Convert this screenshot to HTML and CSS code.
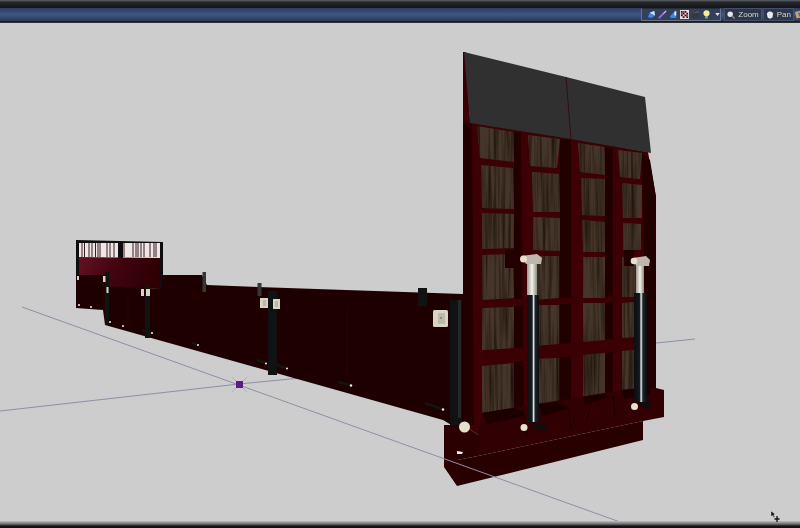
FILE: index.html
```html
<!DOCTYPE html>
<html lang="en">
<head>
<meta charset="utf-8">
<title>3D viewport</title>
<link rel="stylesheet" href="styles.css">
</head>
<body>
<div class="app">
  <header class="topbar">
    <div class="strip"></div>
    <div class="toolbar">
      <div class="group">
        <svg class="ico" viewBox="0 0 10 10"><path d="M1 8 3 3 8 1 9 6 5 9Z" fill="#3f86e0"/><path d="M3 3 8 1 9 6Z" fill="#cfe4fa"/></svg>
        <svg class="ico" viewBox="0 0 10 10"><path d="M1 9 9 1" stroke="#b060e0" stroke-width="2"/><path d="M6 4 9 1" stroke="#e8c8f8" stroke-width="1"/></svg>
        <svg class="ico" viewBox="0 0 10 10"><path d="M1 7 6 2 8 1V9H2Z" fill="#3f86dc"/><path d="M6 2 8 1V6H6Z" fill="#e6f0fb"/></svg>
        <svg class="ico" viewBox="0 0 10 10"><rect width="10" height="10" fill="#e8e0e8"/><path d="M1 1h2v2H1ZM5 1h2v2H5ZM3 3h2v2H3ZM7 3h2v2H7ZM1 5h2v2H1ZM5 5h2v2H5ZM3 7h2v2H3ZM7 7h2v2H7Z" fill="#301020"/><path d="M3 1h2v2H3ZM1 3h2v2H1ZM7 5h2v2H7Z" fill="#c02838"/></svg>
        <svg class="ico" viewBox="0 0 10 10"><path d="M1 4 8 1 9 3V9H1Z" fill="#34383c"/><path d="M1 4 8 1 9 3Z" fill="#5a5e60"/></svg>
        <svg class="ico" viewBox="0 0 10 10"><circle cx="5" cy="3.600" r="3.400" fill="#f6f090"/><rect x="3.600" y="6.600" width="2.800" height="2.800" fill="#a8a878"/></svg>
        <svg class="caret" viewBox="0 0 6 4"><path d="M0 0H6L3 4Z" fill="#e8e8e8"/></svg>
      </div>
      <div class="btn">
        <svg class="ico" viewBox="0 0 10 10"><circle cx="4" cy="4" r="3.400" fill="#e4e8ee"/><path d="M6 6 9.500 9.500" stroke="#8a8a8a" stroke-width="1.600"/></svg>
        <span class="label">Zoom</span>
      </div>
      <div class="btn">
        <svg class="ico" viewBox="0 0 10 10"><path d="M1 3 3 1 5 .5 7 1 9 3 8 8 6 9.500H4L2 8Z" fill="#e6eaf0"/></svg>
        <span class="label">Pan</span>
      </div>
      <svg class="ico last" viewBox="0 0 10 10"><path d="M0 2 8 0 10 8 2 10Z" fill="#d8a060"/><path d="M4 2 8 4 5 8Z" fill="#3868c8"/></svg>
    </div>
    <div class="edge"></div>
  </header>

  <main class="viewport">
    <svg class="scene" viewBox="0 23 800 498" aria-hidden="true">
      <defs>
        <filter id="grain" x="0" y="0" width="100%" height="100%" color-interpolation-filters="sRGB">
          <feTurbulence type="fractalNoise" baseFrequency="0.35 0.012" numOctaves="2" seed="7" result="n"/>
          <feColorMatrix in="n" type="matrix" values="0 0 0 0 0.12  0 0 0 0 0.08  0 0 0 0 0.05  2.200 0 0 0 -0.850" result="d"/>
          <feComposite in="d" in2="SourceAlpha" operator="in" result="s"/>
          <feMerge><feMergeNode in="SourceGraphic"/><feMergeNode in="s"/></feMerge>
        </filter>
        <linearGradient id="backRed" x1="0" x2="1" y1="0" y2="0.200">
          <stop offset="0" stop-color="#641222"/>
          <stop offset=".5" stop-color="#42040e"/>
          <stop offset="1" stop-color="#2e0005"/>
        </linearGradient>
        <linearGradient id="chrome" x1="0" x2="1" y1="0" y2="0">
          <stop offset="0" stop-color="#9a968c"/>
          <stop offset=".5" stop-color="#f4f2ea"/>
          <stop offset="1" stop-color="#8e8a80"/>
        </linearGradient>
        <linearGradient id="tube" x1="0" x2="1" y1="0" y2="0">
          <stop offset="0" stop-color="#0c0e10"/>
          <stop offset=".42" stop-color="#14181c"/>
          <stop offset=".55" stop-color="#e8eef2"/>
          <stop offset=".68" stop-color="#20252a"/>
          <stop offset="1" stop-color="#0a0c0e"/>
        </linearGradient>
      </defs>

      <path class="axis" d="M0 411 239 384 656 343 695 339"/>

      <!-- far gate -->
      <path class="black" d="M76 240 163 242 163 289 160 289 160 258 79 257 79 308 76 308Z"/>
      <rect class="slatbg" x="79" y="243" width="81" height="15"/>
      <path class="slats" d="M82 243V257M84.500 243V257M89 243V257M92 243V257M95.500 243V257M98 243V257M100 243V257M107 243V257M110 243V257M114 243V257M124 243V257M133 243V257M136 243V257M138 243V257M141 243V257M144 243V257M150 243V257M154 243V257M156 243V257"/>
      <rect class="black" x="118" y="242" width="5" height="16"/>
      <path fill="url(#backRed)" d="M79 257 160 258 160 289 105 287 105 275 79 275Z"/>

      <!-- long side wall -->
      <path class="wall" d="M76 275 105 275 105 286 162 289 162 275 202 275 207 285 258 287 463 294 463 432 443 420 105 325 103 310 76 308Z"/>
      <path class="seam" d="M194 290V345M347 305V382M128 290V328"/>

      <!-- posts -->
      <rect class="post" x="105" y="272" width="4" height="53"/>
      <rect class="post" x="145" y="285" width="5" height="53"/>
      <rect class="post2" x="202.500" y="272" width="3.500" height="20"/>
      <rect class="post2" x="257.500" y="283" width="4" height="13"/>
      <rect class="post" x="268" y="291" width="9" height="84"/>
      <rect class="post" x="418" y="288" width="9" height="18"/>
      <rect class="post" x="450" y="300" width="12" height="125"/>
      <rect class="post3" x="458" y="300" width="3" height="118"/>

      <!-- labels -->
      <rect class="tag" x="77" y="276" width="2" height="4"/>
      <rect class="tag" x="103" y="276" width="2.500" height="6"/>
      <rect class="tag" x="106.500" y="287" width="2" height="6"/>
      <rect class="tag" x="141" y="289" width="3" height="7"/>
      <rect class="tag" x="146" y="289" width="4" height="7"/>
      <g>
        <rect class="tag" x="260" y="298" width="8" height="10"/><rect class="tagin" x="263" y="300" width="3" height="6"/>
        <rect class="tag" x="273" y="299" width="7" height="10"/><rect class="tagin" x="275" y="301" width="3" height="6"/>
        <rect class="tag" x="433" y="310" width="15" height="17" rx="1.500"/><rect class="tagin" x="438" y="313" width="7" height="11"/><circle class="dot" cx="441" cy="318" r=".8"/>
      </g>

      <!-- catches -->
      <path class="catch" d="M257 360 266 363M277 365 286 368M192 343 197 345M338 382 350 385M425 403 442 409M142 330 151 333"/>
      <g class="dots">
        <circle cx="266" cy="363.500" r="1"/><circle cx="287" cy="368.500" r="1"/><circle cx="198" cy="345" r="1"/>
        <circle cx="351" cy="385.500" r="1.200"/><circle cx="443" cy="409.500" r="1.200"/><circle cx="152" cy="333" r="1"/>
        <circle cx="123" cy="326" r="1"/><circle cx="110" cy="322" r="1"/><circle cx="91" cy="307" r="1"/><circle cx="79" cy="305" r="1"/>
      </g>

      <!-- big gate -->
      <path class="frame" d="M463 52 470 122 571 138 648 152 656 197 656 388 650 394 480 436 463 425Z"/>
      <path class="frameDark" d="M463 52 470 122 472 124 474 425 463 425Z"/>
      <path class="frameDark" d="M514 132 521 133 524 415 514 420Z"/>
      <path class="frameDark" d="M560 139 571 140 571 405 560 408Z"/>
      <path class="frameDark" d="M605 147 613 149 613 395 605 398Z"/>
      <path class="frameDark" d="M642 153 650 160 656 197 656 388 646 390Z"/>
      <path class="frameBright" d="M483 300 514 298 514 307 483 308ZM483 350 514 348 646 336 646 349 514 362 483 366ZM514 299 622 296 622 302 514 306Z"/>

      <g class="wood">
        <polygon points="477,126 514,132 514,162 480,158"/>
        <polygon points="481,165 513,168 514,209 482,208"/>
        <polygon points="482,213 514,214 514,248 482,249"/>
        <polygon points="482,255 513,254 514,298 482,300"/>
        <polygon points="482,308 514,307 514,348 482,350"/>
        <polygon points="482,366 514,363 514,408 482,413"/>
        <polygon points="528,135 560,139 557,168 530,166"/>
        <polygon points="532,172 559,174 560,212 533,212"/>
        <polygon points="533,217 560,218 560,251 533,250"/>
        <polygon points="533,256 559,256 559,298 533,300"/>
        <polygon points="533,305 559,305 559,344 533,346"/>
        <polygon points="533,359 559,358 559,402 533,404"/>
        <polygon points="578,143 605,147 605,175 580,172"/>
        <polygon points="581,178 605,179 605,216 582,215"/>
        <polygon points="582,220 605,222 605,252 583,252"/>
        <polygon points="583,257 605,257 605,298 583,298"/>
        <polygon points="583,303 605,303 605,340 583,342"/>
        <polygon points="583,355 605,353 605,394 583,397"/>
        <polygon points="618,150 642,153 640,179 620,177"/>
        <polygon points="622,183 642,185 642,218 623,218"/>
        <polygon points="623,223 641,224 641,250 623,250"/>
        <polygon points="622,257 642,257 642,297 622,297"/>
        <polygon points="622,303 635,302 635,337 622,338"/>
        <polygon points="622,351 635,350 635,390 622,390"/>
      </g>
      <path class="frameDark" d="M505 250H514V268H505ZM624 250H634V266H624Z"/>

      <!-- base block -->
      <path class="baseUpper" d="M482 413 622 390 643 388 656 388 664 390 664 417 643 421 478 456 478 432Z"/>
      <path class="baseBeam" d="M457 460 478 456 643 421 643 440 457 486Z"/>
      <path class="baseLeft" d="M444 425 463 425 480 436 478 456 457 460 457 486 444 467Z"/>
      <path class="baseShade" d="M524 415 527 436M569 407 571 428M613 396 615 417M586 422 590 408"/>
      <path class="sill" d="M482 413 514 408 524 412 524 416 488 424ZM539 404 559 402 570 408 542 416ZM583 397 605 394 610 397 585 404ZM622 390 650 387 650 394 624 399Z"/>

      <!-- top panel -->
      <path class="panelEdge" d="M463 52 466 52 470 123 463 124Z"/>
      <path class="panel" d="M464 52 566 77 645 97 651 153 571 139 470 123Z"/>
      <path class="panelLine" d="M566 77 571 139"/>

      <!-- cylinders -->
      <rect fill="url(#chrome)" x="527" y="263" width="10" height="32"/>
      <rect fill="url(#tube)" x="527" y="295" width="12" height="127"/>
      <path class="head" d="M521 256 537 254 542 258 541 264 526 264Z"/>
      <circle class="knob" cx="523.500" cy="259" r="3.500"/>
      <path class="black" d="M530 422 545 425 548 431 534 428Z"/>
      <rect fill="url(#chrome)" x="636" y="265" width="8" height="28"/>
      <rect fill="url(#tube)" x="634" y="293" width="13" height="109"/>
      <path class="head" d="M633 258 646 256 650 260 649 266 636 266Z"/>
      <circle class="knob" cx="634" cy="261" r="3.300"/>
      <path class="black" d="M640 402 650 402 651 407 642 408Z"/>

      <circle class="knob" cx="464.500" cy="427" r="5.500"/>
      <circle class="knob" cx="524" cy="427.500" r="3.500"/>
      <circle class="knob" cx="634.500" cy="406.500" r="3.500"/>
      <path class="notch" d="M457 451 463 452 462 454 457 454Z"/>
      <path class="black" d="M456 455 470 455 463 458Z"/>

      <path class="axis" d="M22 307 620 522"/>
      <path class="cross" d="M232 377 247 392M247 377 232 392"/>
      <rect class="origin" x="236" y="381" width="7" height="7"/>
    </svg>
  </main>

  <footer class="bottombar"></footer>

  <svg class="cursor" viewBox="0 0 9 12" aria-hidden="true">
    <path d="M0 0 4 3 2.600 4 4 6 3 6.600 1.500 4.600 0 5.500Z" fill="#111" stroke="#eee" stroke-width=".4"/>
    <path d="M6 5V11M3.500 8H8.500" stroke="#111" stroke-width="1.300"/>
  </svg>
</div>
</body>
</html>
```

FILE: styles.css
```css
* { box-sizing: border-box; }
html, body { margin: 0; padding: 0; }
body { background: #ccc; font-family: "Liberation Sans", Arial, sans-serif; overflow: hidden; }

.app {
  position: relative;
  display: flex;
  flex-direction: column;
  width: 800px;
  height: 528px;
  overflow: hidden;
}

.topbar { flex: 0 0 23px; display: flex; flex-direction: column; background: #141518; }
.strip { flex: 0 0 8px; background: linear-gradient(#5a5e66 0, #4a4d52 1px, #26282b 2px, #1c1d20 5px, #151618 8px); }
.toolbar {
  flex: 0 0 13px;
  display: flex;
  align-items: center;
  justify-content: flex-end;
  gap: 1px;
  background: linear-gradient(#2e3d60, #3f5585 50%, #2c3a58);
  filter: blur(.5px);
}
.edge { flex: 0 0 2px; background: linear-gradient(#0e0f12, #3a3a3a); }

.group {
  display: flex;
  align-items: center;
  gap: 2px;
  width: 80px;
  height: 13px;
  padding: 0 3px 0 5px;
  margin-right: 2px;
  background: #333f5c;
  border: 1px solid #6a7488;
  border-top-color: #262c3a;
}
.btn {
  display: flex;
  align-items: center;
  gap: 3px;
  height: 13px;
  padding: 0 2px;
  background: #2e364a;
  border: 1px solid #45506a;
}
.ico { width: 9px; height: 9px; flex: none; display: block; }
.btn .ico { width: 8px; height: 8px; }
.last { width: 8px; margin-right: -3px; }
.caret { width: 5px; height: 3px; flex: none; margin-left: 2px; }
.label { font-size: 8px; line-height: 11px; color: #d4d4d4; }

.viewport { flex: 1; min-height: 0; background: #cdcdcd; }
.scene { display: block; width: 800px; height: 498px; filter: blur(.55px); }

.bottombar { flex: 0 0 7px; background: linear-gradient(#bdbdbd, #8a8a8a 2px, #4a4a4a 4px, #121214 5px); }

.cursor { position: absolute; left: 771px; top: 511px; width: 9px; height: 12px; }

.axis { fill: none; stroke: #8b90a6; stroke-width: 1; }
.black { fill: #0e0e10; }
.slatbg { fill: #efe6e6; }
.slats { fill: none; stroke: #3a1a20; stroke-width: 1; }
.wall { fill: #1e0001; }
.seam { fill: none; stroke: #2a0004; stroke-width: 1; }
.post { fill: #101214; }
.post2 { fill: #33373a; }
.post3 { fill: #23272a; }
.tag { fill: #d8d4c4; }
.tagin { fill: #bdb8a6; }
.dot { fill: #555; }
.catch { fill: none; stroke: #141414; stroke-width: 2.500; }
.dots circle { fill: #f2f0e8; }
.baseUpper { fill: #300002; }
.baseBeam { fill: #280000; }
.baseLeft { fill: #2c0001; }
.baseShade { fill: none; stroke: #1a0000; stroke-width: 1; }
.frame { fill: #3c0005; }
.frameDark { fill: #220000; }
.frameBright { fill: #3a0004; }
.wood { fill: #46362a; filter: url(#grain); }
.sill { fill: #1c0000; }
.panel { fill: #303030; }
.panelEdge { fill: #3a0004; }
.panelLine { fill: none; stroke: #3a0a0e; stroke-width: 1; }
.head { fill: #bdb8ac; }
.knob { fill: #e6e0cc; }
.notch { fill: #f4f0e8; }
.cross { fill: none; stroke: #b49ab0; stroke-width: .7; }
.origin { fill: #5c1a86; }
```
